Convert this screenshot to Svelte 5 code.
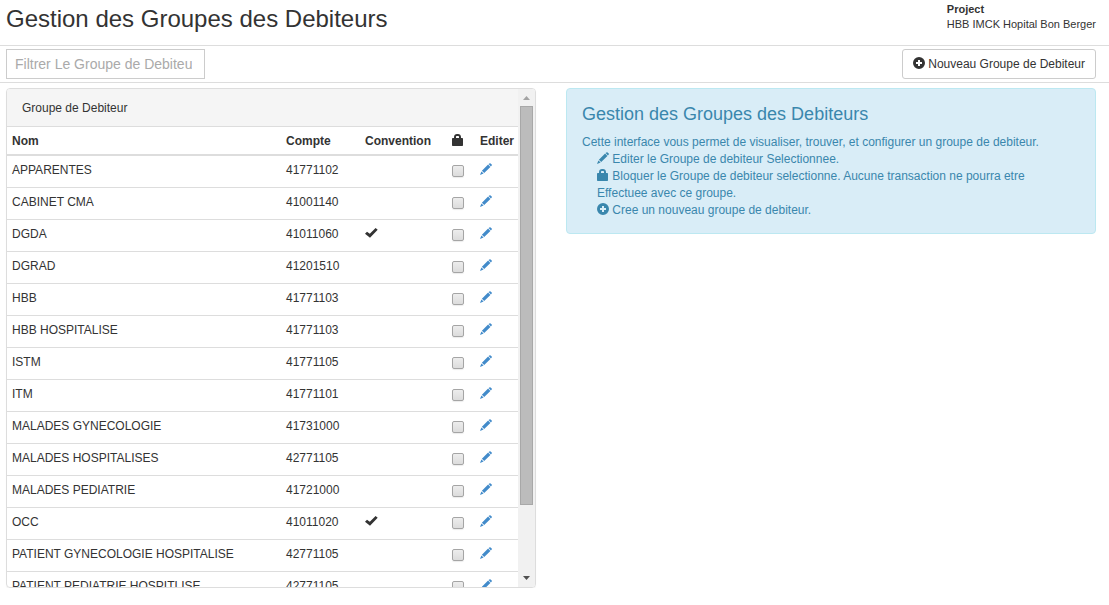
<script>
  let filter = $state('');

  const groups = [
    { name: 'APPARENTES', account: '41771102' },
    { name: 'CABINET CMA', account: '41001140' },
    { name: 'DGDA', account: '41011060', convention: true },
    { name: 'DGRAD', account: '41201510' },
    { name: 'HBB', account: '41771103' },
    { name: 'HBB HOSPITALISE', account: '41771103' },
    { name: 'ISTM', account: '41771105' },
    { name: 'ITM', account: '41771101' },
    { name: 'MALADES GYNECOLOGIE', account: '41731000' },
    { name: 'MALADES HOSPITALISES', account: '42771105' },
    { name: 'MALADES PEDIATRIE', account: '41721000' },
    { name: 'OCC', account: '41011020', convention: true },
    { name: 'PATIENT GYNECOLOGIE HOSPITALISE', account: '42771105' },
    { name: 'PATIENT PEDIATRIE HOSPITLISE', account: '42771105' }
  ];

  const visible = $derived(
    groups.filter((g) => g.name.toLowerCase().includes(filter.toLowerCase()))
  );
</script>

{#snippet pencil()}
  <svg class="icon" viewBox="0 0 12 12" aria-hidden="true">
    <path d="M9.4.4 Q10 -.1 10.6.4 L11.7 1.5 Q12.2 2.1 11.7 2.6 L10.9 3.4 8.6 1.1Z M8.1 1.6 10.4 3.9 4.2 10.1 1.9 7.8Z M1.4 8.4 3.6 10.6 0 12Z" />
  </svg>
{/snippet}

{#snippet lock()}
  <svg class="icon" viewBox="0 0 12 12" aria-hidden="true">
    <path fill-rule="evenodd" d="M2 4V3C2 1 3.3 0 5 0H6C7.7 0 9 1 9 3V4H10.2Q11 4 11 4.8V11.3Q11 12 10.3 12H.7Q0 12 0 11.3V4.8Q0 4 .8 4Z M4 4H7V3C7 2.3 6.6 2 6 2H5C4.4 2 4 2.3 4 3Z" />
  </svg>
{/snippet}

{#snippet plus()}
  <svg class="icon" viewBox="0 0 12 12" aria-hidden="true">
    <path fill-rule="evenodd" d="M6 0A6 6 0 1 1 6 12A6 6 0 1 1 6 0Z M5 3V5H3V7H5V9H7V7H9V5H7V3Z" />
  </svg>
{/snippet}

<header>
  <h1>Gestion des Groupes des Debiteurs</h1>
  <div class="project">
    <strong>Project</strong>
    <span>HBB IMCK Hopital Bon Berger</span>
  </div>
</header>

<div class="toolbar">
  <input
    class="filter"
    type="text"
    aria-label="Filtrer Le Groupe de Debiteur"
    placeholder="Filtrer Le Groupe de Debiteur"
    bind:value={filter}
  />
  <button class="create" type="button">{@render plus()} Nouveau Groupe de Debiteur</button>
</div>

<main>
  <section class="panel">
    <div class="scroller">
      <h2>Groupe de Debiteur</h2>
      <table>
        <thead>
          <tr>
            <th>Nom</th>
            <th class="account">Compte</th>
            <th class="convention">Convention</th>
            <th class="locked" aria-label="Bloquer">{@render lock()}</th>
            <th class="edit">Editer</th>
          </tr>
        </thead>
        <tbody>
          {#each visible as group (group.name)}
            <tr>
              <td>{group.name}</td>
              <td>{group.account}</td>
              <td>
                {#if group.convention}
                  <svg class="icon tick" viewBox="0 0 13 12" aria-label="Convention">
                    <path d="M0 6.8 2 4.7 4.8 6.8 10.6 1 12.7 2.8 5 10.8Z" />
                  </svg>
                {/if}
              </td>
              <td><input type="checkbox" aria-label="Bloquer {group.name}" /></td>
              <td><a href="#edit" aria-label="Editer {group.name}">{@render pencil()}</a></td>
            </tr>
          {/each}
        </tbody>
      </table>
    </div>
    <div class="scrollbar" aria-hidden="true">
      <svg viewBox="0 0 17 17"><path class="up" d="M5 11 8.5 7 12 11Z" /></svg>
      <div class="track"><div class="thumb"></div></div>
      <svg viewBox="0 0 17 17"><path class="down" d="M5 6H12L8.5 10Z" /></svg>
    </div>
  </section>

  <aside>
    <h3>Gestion des Groupes des Debiteurs</h3>
    <p>Cette interface vous permet de visualiser, trouver, et configurer un groupe de debiteur.</p>
    <ul>
      <li>{@render pencil()} Editer le Groupe de debiteur Selectionnee.</li>
      <li>{@render lock()} Bloquer le Groupe de debiteur selectionne. Aucune transaction ne pourra etre Effectuee avec ce groupe.</li>
      <li>{@render plus()} Cree un nouveau groupe de debiteur.</li>
    </ul>
  </aside>
</main>

<style>
  :global(body) {
    font: 12px/17px "Liberation Sans", Arial, sans-serif;
    color: #333;
    background: #fff;
  }

  :global(*) {
    box-sizing: border-box;
  }

  h1, h2, h3, p, ul {
    margin: 0;
    font-weight: normal;
  }

  .icon {
    width: 12px;
    height: 12px;
    fill: currentColor;
    vertical-align: -1px;
  }

  header {
    display: flex;
    justify-content: space-between;
    padding: 2px 13px 10px 6px;
    border-bottom: 1px solid #ddd;
  }

  h1 {
    font-size: 24px;
    line-height: 33px;
  }

  .project {
    display: flex;
    flex-direction: column;
    font-size: 11px;
    line-height: 15px;
  }

  .toolbar {
    display: flex;
    justify-content: space-between;
    padding: 3px 13px 3px 6px;
    border-bottom: 1px solid #ddd;
  }

  .filter {
    width: 199px;
    height: 30px;
    padding: 0 12px 0 8px;
    border: 1px solid #ccc;
    font: 14px "Liberation Sans", Arial, sans-serif;
    color: #555;
  }

  .filter::placeholder {
    color: #aaa;
  }

  .create {
    height: 30px;
    padding: 0 10px;
    border: 1px solid #ccc;
    border-radius: 3px;
    background: #fff;
    font: 12px/17px "Liberation Sans", Arial, sans-serif;
    color: #333;
  }

  main {
    display: grid;
    grid-template-columns: 1fr 1fr;
    gap: 30px;
    align-items: start;
    padding: 5px 13px 0 6px;
  }

  .panel {
    display: flex;
    height: calc(100vh - 105px);
    border: 1px solid #ddd;
    border-radius: 4px;
    box-shadow: 0 1px 1px rgba(0, 0, 0, 0.05);
    overflow: hidden;
  }

  .scroller {
    flex: 1;
    overflow-y: auto;
    scrollbar-width: none;
  }

  h2 {
    padding: 11px 15px 9px;
    border-bottom: 1px solid #ddd;
    background: #f5f5f5;
    font-size: 12px;
    line-height: 17px;
  }

  table {
    width: 100%;
    table-layout: fixed;
    border-collapse: separate;
    border-spacing: 0;
  }

  th {
    padding: 6px 5px 4px;
    border-bottom: 2px solid #ddd;
    text-align: left;
    white-space: nowrap;
  }

  td {
    height: 32px;
    padding: 6px 5px 8px;
    border-bottom: 1px solid #ddd;
    vertical-align: top;
    white-space: nowrap;
  }

  .account {
    width: 79px;
  }

  .convention {
    width: 87px;
  }

  .locked {
    width: 28px;
  }

  .edit {
    width: 43px;
  }

  .tick {
    width: 13px;
  }

  input[type='checkbox'] {
    appearance: none;
    display: block;
    width: 12px;
    height: 12px;
    margin: 3px 0 0;
    border: 1px solid #a5a5a5;
    border-radius: 2px;
    background: linear-gradient(#ededed, #dcdcdc);
    box-shadow: 0 1px 1px rgba(0, 0, 0, 0.08);
  }

  input[type='checkbox']:checked {
    background: #428bca;
  }

  a {
    color: #428bca;
  }

  .scrollbar {
    display: flex;
    flex-direction: column;
    width: 17px;
    background: #f1f1f1;
  }

  .scrollbar svg {
    width: 17px;
    height: 17px;
  }

  .up {
    fill: #a3a3a3;
  }

  .down {
    fill: #505050;
  }

  .track {
    flex: 1;
    padding: 0 2px;
  }

  .thumb {
    height: 86%;
    border: 1px solid #a8a8a8;
    background: #bcbcbc;
  }

  aside {
    padding: 15px 15px 14px;
    border: 1px solid #bce8f1;
    border-radius: 4px;
    background: #d9edf7;
    color: #3a87ad;
  }

  h3 {
    margin-bottom: 10px;
    font-size: 18px;
    line-height: 20px;
  }

  ul {
    padding: 0 15px;
    list-style: none;
  }
</style>
